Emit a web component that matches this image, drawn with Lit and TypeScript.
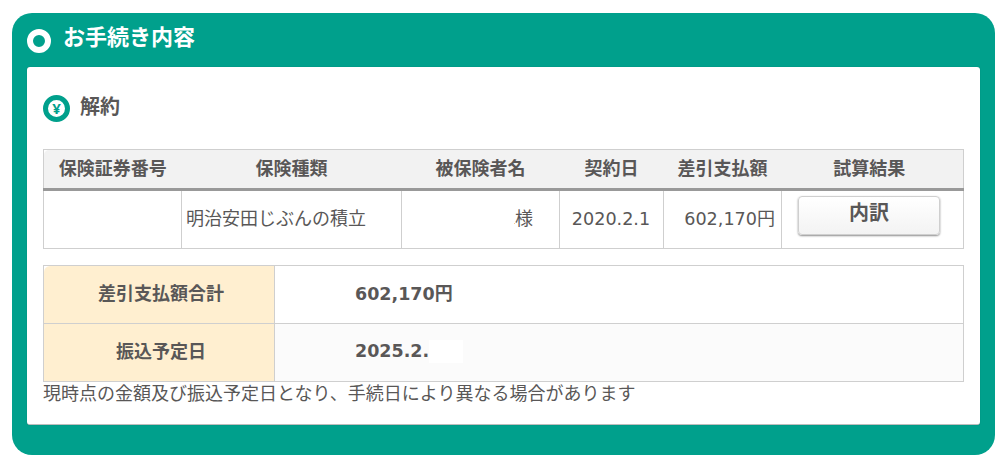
import { LitElement, html, css } from "lit";
import { customElement } from "lit/decorators.js";

@customElement("app-root")
export class AppRoot extends LitElement {
  static styles = css`
    :host {
      display: block;
      width: 998px;
      height: 459px;
      background: #fff;
      overflow: hidden;
      font-family: "DejaVu Sans", "Noto Sans CJK JP", sans-serif;
      font-size: 18px;
      color: #595757;
      box-sizing: border-box;
      padding: 13px 3px 4px 12px;
    }
    * { box-sizing: border-box; }
    .panel {
      height: 442px;
      background: #00a08c;
      border-radius: 20px;
      padding: 0 15px 30px;
      display: flex;
      flex-direction: column;
    }
    .title {
      height: 54px;
      display: flex;
      align-items: center;
      gap: 12px;
      color: #fff;
      font-weight: 700;
      flex: none;
    }
    .title-text { font-size: 22px; line-height: 50px; margin-top: -4px; }
    .ring {
      width: 24px;
      height: 24px;
      margin-top: 1px;
      border-radius: 50%;
      border: 6px solid #fff;
      background: #00a08c;
      flex: none;
    }
    .body {
      flex: 1;
      background: #fff;
      border-radius: 3px;
      border-bottom: 1px solid #bdbdbd;
      padding: 0 16px;
      box-shadow: 0 0 1px rgba(0, 0, 0, 0.3);
    }
    .sub {
      height: 82px;
      display: flex;
      align-items: center;
      gap: 10px;
      font-size: 20px;
      font-weight: 700;
    }
    .yen {
      width: 27px;
      height: 27px;
      border-radius: 50%;
      border: 5px solid #00a08c;
      background: #fff;
      color: #00a08c;
      font-size: 15px;
      font-weight: 700;
      font-family: "Noto Sans", sans-serif;
      display: flex;
      align-items: center;
      justify-content: center;
      line-height: 1;
      margin-top: 1px;
      flex: none;
    }
    .sub-text { margin-top: -6px; }
    table { border-collapse: collapse; table-layout: fixed; width: 921px; }
    th, td { border: 1px solid #cfcfcf; padding: 0; }
    .list { width: 920px; }
    .list th {
      background: #f2f2f2;
      height: 40px;
      font-size: 18px;
      font-weight: 700;
      border-left: none;
      border-right: none;
      border-bottom: 3px solid #999;
      padding-bottom: 5px;
    }
    .list th:first-child { border-top-left-radius: 5px; border-left: 1px solid #cfcfcf; }
    .list th:last-child { border-right: 1px solid #cfcfcf; padding-right: 6px; }
    .list td { height: 59px; padding: 0 6px 5px 4px; }
    .r { text-align: right; }
    .num { font-size: 17.6px; }
    .list td.date { padding-bottom: 1px; padding-left: 5px; text-align: center; }
    .list td.c-btn { vertical-align: top; padding: 5px 0 0 16px; }
    .btn {
      display: block;
      width: 142px;
      height: 39px;
      border: 1px solid #cfcfcf;
      border-radius: 4px;
      background: linear-gradient(#fff, #f3f3f3);
      box-shadow: 0 1px 2px rgba(0, 0, 0, 0.45);
      font: inherit;
      font-size: 20px;
      font-weight: 700;
      color: #595757;
      padding: 0 0 6px;
      line-height: 28px;
    }
    .dot {
      display: inline-block;
      width: 1px;
      height: 1px;
      background: #f7c98a;
      vertical-align: -3px;
    }
    .sama { float: right; padding-right: 20px; }
    .sum { margin-top: 16px; }
    .sum th {
      background: #ffefd0;
      height: 58px;
      font-size: 18px;
      font-weight: 700;
      padding: 0 0 6px 4px;
    }
    .sum tr:first-child th { border-top-left-radius: 6px; }
    .sum td {
      padding-left: 80px;
      padding-bottom: 6px;
      font-size: 17.5px;
      font-weight: 700;
    }
    .sum tr:nth-child(2) td { background: #fbfbfb; padding-bottom: 2px; }
    .yen-unit { font-size: 18px; }
    .mask {
      display: inline-block;
      width: 34px;
      height: 23px;
      background: #fff;
      vertical-align: middle;
    }
    .note { line-height: 24px; margin-top: 0; white-space: nowrap; }
  `;

  render() {
    return html`
      <div class="panel">
        <div class="title"><span class="ring"></span><span class="title-text">お手続き内容</span></div>
        <div class="body">
          <div class="sub"><span class="yen">¥</span><span class="sub-text">解約</span></div>
          <table class="list">
            <colgroup>
              <col style="width:138px" /><col style="width:220px" /><col style="width:158px" />
              <col style="width:104px" /><col style="width:118px" /><col style="width:182px" />
            </colgroup>
            <tr>
              <th>保険証券番号</th><th>保険種類</th><th>被保険者名</th><th>契約日</th><th>差引支払額</th><th>試算結果</th>
            </tr>
            <tr>
              <td></td>
              <td>明治安田じぶんの積立</td>
              <td class="r"><span class="dot"></span><span class="sama">様</span></td>
              <td class="num date">2020.2.1</td>
              <td class="r"><span class="num">602,170</span>円</td>
              <td class="c-btn"><button class="btn">内訳</button></td>
            </tr>
          </table>
          <table class="sum">
            <colgroup><col style="width:231px" /><col /></colgroup>
            <tr><th>差引支払額合計</th><td>602,170<span class="yen-unit">円</span></td></tr>
            <tr><th>振込予定日</th><td>2025.2.<span class="mask"></span></td></tr>
          </table>
          <div class="note">現時点の金額及び振込予定日となり、手続日により異なる場合があります</div>
        </div>
      </div>
    `;
  }
}
